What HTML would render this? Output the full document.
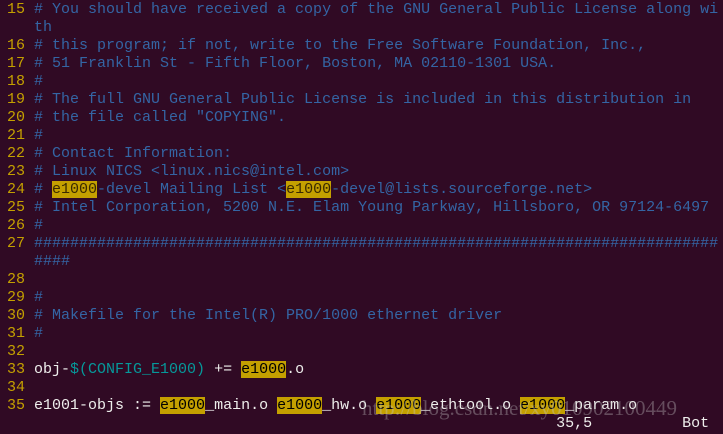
<!DOCTYPE html>
<html><head><style>
body{margin:0;background:#300a24;width:723px;height:434px;overflow:hidden;}
pre{margin:0;position:absolute;left:-2px;top:1px;font-family:"Liberation Mono",monospace;font-size:15px;line-height:18px;color:#eeeeec;}
.n{color:#c4a000}.c{color:#3465a4}.t{color:#06989a}
.h{background:#c4a000;color:#000}
.h2{background:#c4a000;color:#3a2a00}
.wm{position:absolute;left:362px;top:396px;font-family:"Liberation Serif",serif;font-size:21px;color:rgba(200,200,200,0.35);}
</style></head><body>
<pre><span class="n"> 15 </span><span class="c"># You should have received a copy of the GNU General Public License along wi</span>
<span class="c">    th</span>
<span class="n"> 16 </span><span class="c"># this program; if not, write to the Free Software Foundation, Inc.,</span>
<span class="n"> 17 </span><span class="c"># 51 Franklin St - Fifth Floor, Boston, MA 02110-1301 USA.</span>
<span class="n"> 18 </span><span class="c">#</span>
<span class="n"> 19 </span><span class="c"># The full GNU General Public License is included in this distribution in</span>
<span class="n"> 20 </span><span class="c"># the file called "COPYING".</span>
<span class="n"> 21 </span><span class="c">#</span>
<span class="n"> 22 </span><span class="c"># Contact Information:</span>
<span class="n"> 23 </span><span class="c"># Linux NICS &lt;linux.nics@intel.com&gt;</span>
<span class="n"> 24 </span><span class="c"># <span class="h2">e1000</span>-devel Mailing List &lt;<span class="h2">e1000</span>-devel@lists.sourceforge.net&gt;</span>
<span class="n"> 25 </span><span class="c"># Intel Corporation, 5200 N.E. Elam Young Parkway, Hillsboro, OR 97124-6497</span>
<span class="n"> 26 </span><span class="c">#</span>
<span class="n"> 27 </span><span class="c">############################################################################</span>
<span class="c">    ####</span>
<span class="n"> 28 </span>
<span class="n"> 29 </span><span class="c">#</span>
<span class="n"> 30 </span><span class="c"># Makefile for the Intel(R) PRO/1000 ethernet driver</span>
<span class="n"> 31 </span><span class="c">#</span>
<span class="n"> 32 </span>
<span class="n"> 33 </span>obj-<span class="t">$(CONFIG_E1000)</span> += <span class="h">e1000</span>.o
<span class="n"> 34 </span>
<span class="n"> 35 </span>e1001-objs := <span class="h">e1000</span>_main.o <span class="h">e1000</span>_hw.o <span class="h">e1000</span>_ethtool.o <span class="h">e1000</span>_param.o
                                                              35,5          Bot</pre>
<div class="wm">http://blog.csdn.net/xy010902100449</div>
</body></html>
